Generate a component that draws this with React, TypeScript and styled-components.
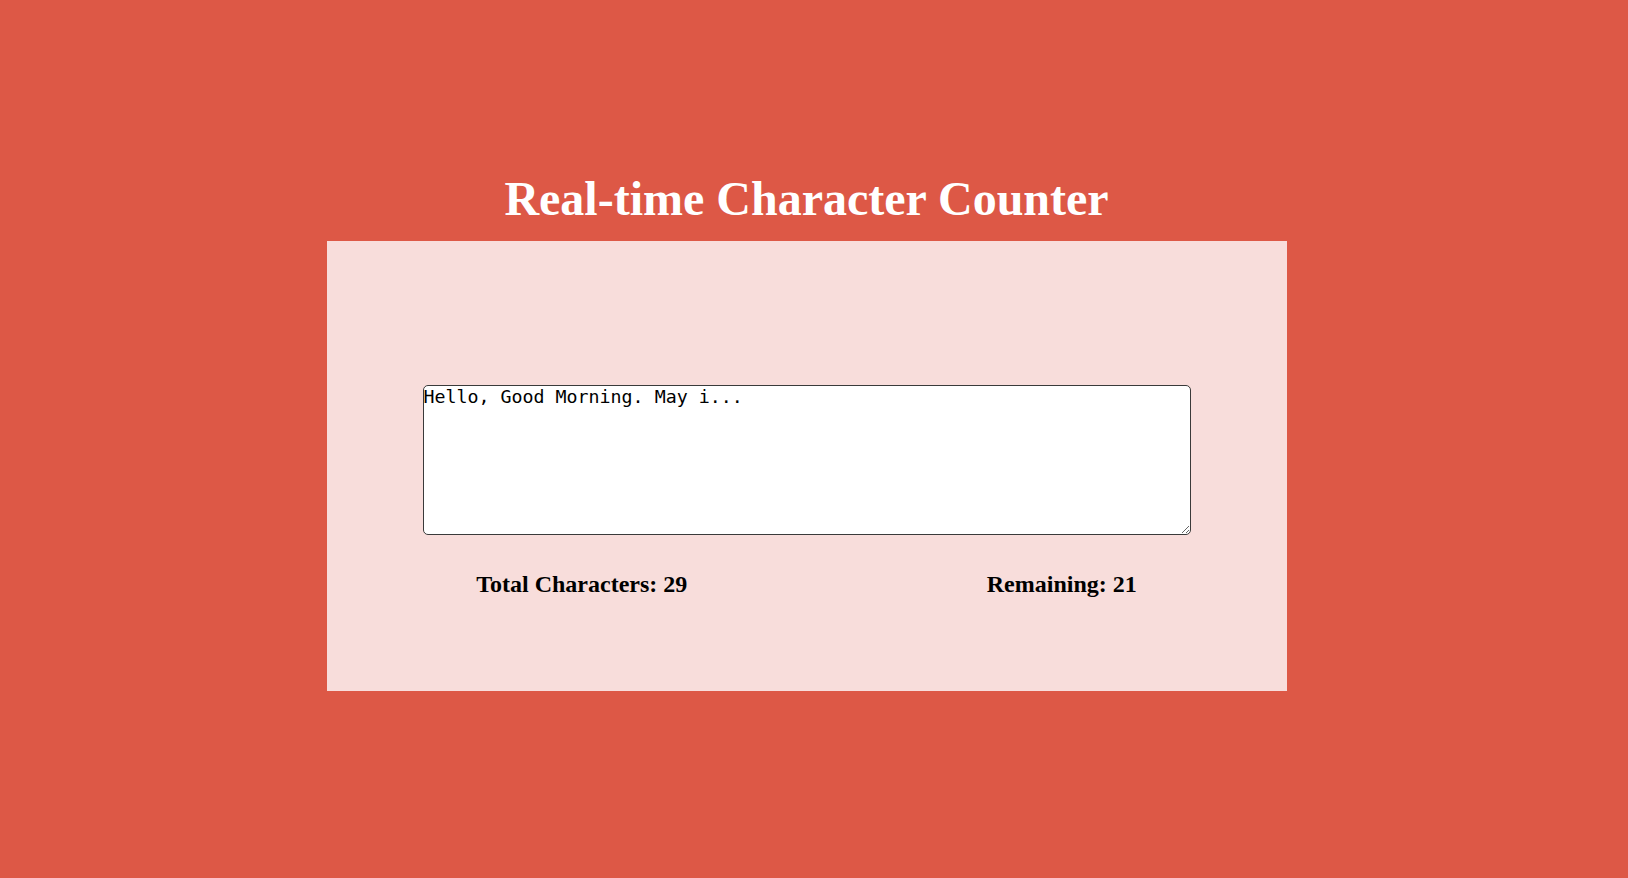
import React, { useState } from "react";
import styled, { createGlobalStyle } from "styled-components";

const GlobalStyle = createGlobalStyle`
  html, body {
    margin: 0;
    padding: 0;
    background: #dd5846;
  }
  body {
    font-family: "Liberation Serif", "Times New Roman", serif;
  }
`;

const Page = styled.main`
  min-height: 878px;
  box-sizing: border-box;
  padding: 172px 15px 0 0;
  display: flex;
  flex-direction: column;
  align-items: center;
`;

const Title = styled.h1`
  margin: 0 0 16px;
  font-family: "Liberation Serif", "Times New Roman", serif;
  font-size: 48px;
  font-weight: 700;
  line-height: 53px;
  color: #ffffff;
  text-align: center;
`;

const Panel = styled.section`
  width: 960px;
  box-sizing: border-box;
  background: #f8dddb;
  padding: 144px 0 93px;
  display: flex;
  flex-direction: column;
  align-items: center;
`;

const TextBox = styled.textarea`
  display: block;
  width: 768px;
  height: 150px;
  box-sizing: border-box;
  margin: 0;
  padding: 0;
  border: 1px solid #3a3a3a;
  border-radius: 5px;
  background: #ffffff;
  color: #000000;
  font-family: "DejaVu Sans Mono", "Liberation Mono", monospace;
  font-size: 18.3px;
  outline: none;
`;

const Stats = styled.div`
  margin-top: 36px;
  width: 100%;
  display: flex;
  justify-content: space-around;
`;

const Stat = styled.p`
  margin: 0;
  font-family: "Liberation Serif", "Times New Roman", serif;
  font-size: 24px;
  line-height: 27px;
  font-weight: 700;
  color: #000000;
`;

const MAX = 50;

export default function App() {
  const [text, setText] = useState("Hello, Good Morning. May i...");
  return (
    <>
      <GlobalStyle />
      <Page>
        <Title>Real-time Character Counter</Title>
        <Panel>
          <TextBox
            value={text}
            maxLength={MAX}
            spellCheck={false}
            onChange={(e) => setText(e.target.value)}
          />
          <Stats>
            <Stat>Total Characters: {text.length}</Stat>
            <Stat>Remaining: {MAX - text.length}</Stat>
          </Stats>
        </Panel>
      </Page>
    </>
  );
}
